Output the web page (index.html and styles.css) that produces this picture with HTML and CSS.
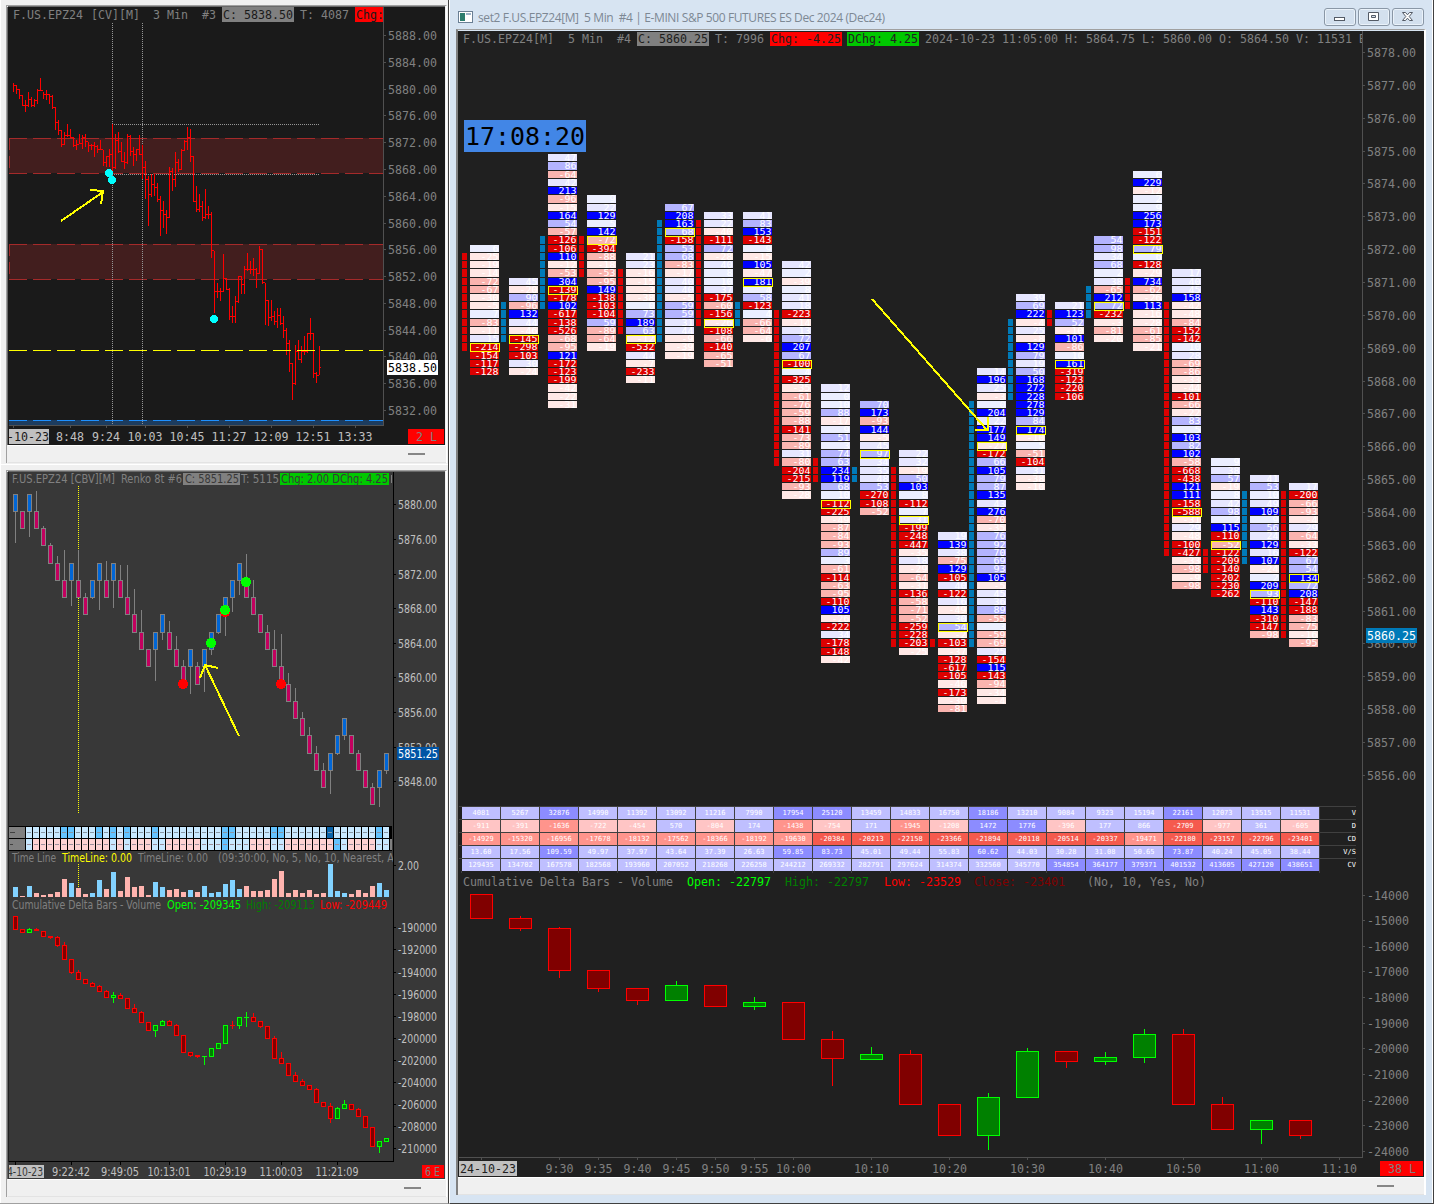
FILE: index.html
```html
<!DOCTYPE html>
<html lang="en">
<head>
    <meta charset="UTF-8">
    <title>set2 F.US.EPZ24[M] 5 Min #4</title>
    <link rel="stylesheet" href="styles.css">
</head>
<body>
    <div class="left-column">
        <div class="pane pane-cv">
            <div class="client">
                <svg id="chart-cv" class="chart mono" width="437" height="438" viewBox="8 7 437 438"></svg>
                <div class="strip"><span class="grip"></span></div>
            </div>
        </div>
        <div class="pane pane-renko">
            <div class="client">
                <svg id="chart-renko" class="chart sans" width="437" height="707" viewBox="8 472 437 707"></svg>
                <div class="strip"><span class="grip"></span></div>
            </div>
        </div>
    </div>

    <div class="window">
        <div class="titlebar">
            <svg class="app-icon" width="15" height="12" viewBox="0 0 15 12">
                <rect x="0.5" y="0.5" width="14" height="11" fill="#fff" stroke="#6a7f94"/>
                <rect x="2" y="2" width="5" height="8" fill="#2d7d6e"/>
                <rect x="8" y="2" width="5" height="2" fill="#9db3c8"/>
            </svg>
            <span class="title">set2 F.US.EPZ24[M]&nbsp; 5 Min&nbsp; #4 | E-MINI S&amp;P 500 FUTURES ES Dec 2024 (Dec24)</span>
            <div class="buttons">
                <button class="btn"><svg width="12" height="10" viewBox="0 0 12 10"><rect x="0.5" y="5.5" width="10" height="3" fill="#fff" stroke="#545b66"/></svg></button>
                <button class="btn"><svg width="12" height="10" viewBox="0 0 12 10"><path d="M.5 .5h10v8h-10z M3.5 3.5h4v2h-4z" fill="#fff" fill-rule="evenodd" stroke="#545b66"/></svg></button>
                <button class="btn"><svg width="12" height="10" viewBox="0 0 12 10"><path d="M.5 .5h3l2 2.3 2-2.3h3l-3.3 4 3.3 4h-3l-2-2.3-2 2.3h-3l3.3-4z" fill="#fff" stroke="#545b66"/></svg></button>
            </div>
        </div>
        <div class="client">
            <svg id="chart-foot" class="chart mono" width="966" height="775" viewBox="458 31 966 775"></svg>
            <div class="stats">
                <div id="stats-grid" class="stats-grid"></div>
                <div class="stats-axis"></div>
            </div>
            <svg id="chart-delta" class="chart mono" width="966" height="306" viewBox="458 871 966 306"></svg>
            <div class="strip"><span class="grip"></span></div>
        </div>
    </div>
    <script src="script.js"></script>
</body>
</html>
```
FILE: styles.css
```css
* {
    box-sizing: border-box;
}

body {
    margin: 0;
    width: 1434px;
    height: 1204px;
    display: flex;
    background-color: #f0f0f0;
    overflow: hidden;
}

.left-column {
    width: 449px;
    height: 1204px;
    border-right: 1px solid #404040;
    border-bottom: 1px solid #a0a0a0;
}

.pane {
    border-left: 1px solid #fff;
    padding: 5px 1px 0 5px;
    background-color: #f0f0f0;
}

.pane-cv {
    height: 464px;
}

.pane-renko {
    height: 739px;
    border-top: 1px solid #fff;
}

.client {
    border-top: 1px solid #a0a0a0;
    border-left: 1px solid #a0a0a0;
    border-right: 1px solid #fff;
}

.chart {
    display: block;
    shape-rendering: crispEdges;
    white-space: pre;
}

.pane .chart {
    box-shadow: 0 -1px 0 #696969, -1px 0 0 #696969;
}

.pane .client {
    padding: 1px 0 0 1px;
}

.mono text {
    font-family: "DejaVu Sans Mono", "Liberation Mono", monospace;
    font-size: 11.4px;
}

.sans text {
    font-family: "DejaVu Sans Condensed", "DejaVu Sans", sans-serif;
    font-size: 11.5px;
}

.mono .cell {
    font-size: 9px;
}

.mono .clock {
    font-size: 24px;
}

.strip {
    height: 18px;
    background-color: #f0f0f0;
    border-top: 1px solid #fff;
    border-bottom: 1px solid #e3e3e3;
    display: flex;
    justify-content: flex-end;
    padding: 7px 21px 0 0;
}

.pane-renko .strip {
    padding-right: 25px;
}

.grip {
    width: 17px;
    height: 2px;
    background-color: #868686;
}

/* main window */

.window {
    width: 985px;
    height: 1204px;
    padding: 0 7px 8px 6px;
    background-color: #d7e4f2;
    border-left: 1px solid #fff;
    border-right: 1px solid #404040;
    border-bottom: 1px solid #404040;
    box-shadow: inset -1px 0 0 #fff;
}

.titlebar {
    height: 29px;
    display: flex;
    align-items: center;
    padding: 5px 2px 0 2px;
    font-family: "Open Sans", "Noto Sans", sans-serif;
    font-size: 12px;
    letter-spacing: -0.39px;
    color: #7d8894;
}

.title {
    margin-left: 5px;
    flex: 1;
    white-space: nowrap;
}

.buttons {
    display: flex;
    gap: 2px;
}

.btn {
    width: 32px;
    height: 18px;
    padding: 0;
    display: flex;
    align-items: center;
    justify-content: center;
    border: 1px solid #8a97a6;
    border-radius: 3px;
    background-color: #d3e0ee;
    box-shadow: inset 0 0 0 1px #eaf2fa;
}

.window .client {
    border-left: 2px solid #808080;
    border-right-width: 2px;
    padding-top: 1px;
}

.window .strip {
    height: 18px;
    padding-right: 30px;
}

.stats {
    display: flex;
    width: 966px;
    height: 65px;
    background-color: #202020;
}

.stats-grid {
    width: 904px;
    display: grid;
    grid-template-columns: 3px repeat(22, 39px) 36px;
    grid-auto-rows: 13px;
    padding-left: 1px;
    font-family: "DejaVu Sans Mono", "Liberation Mono", monospace;
    font-size: 7px;
    line-height: 13px;
    color: #fff;
}

.stats-axis {
    width: 62px;
    border-left: 1px solid #505050;
}

.stat {
    border-top: 1px solid #404040;
    border-right: 1px solid #404040;
    text-align: center;
}

.edge {
    border-top: 1px solid #404040;
}

.row-label {
    border-top: 1px solid #404040;
    text-align: right;
}

.blue-1 { background-color: #bfbfff; }
.blue-2 { background-color: #8c8cff; }
.red-1 { background-color: #ffc5c5; }
.red-2 { background-color: #ff948c; }
.red-3 { background-color: #f55a4e; }
```
FILE: script.js
```js
function rect(x, y, w, h, fill, extra) {
    return '<rect x="' + x + '" y="' + y + '" width="' + w + '" height="' + h + '" fill="' + fill + '" ' + (extra || '') + '/>';
}

function box(x, y, w, h, fill, stroke) {
    return rect(x + 0.5, y + 0.5, w - 1, h - 1, fill, 'stroke="' + stroke + '"');
}

function line(x1, y1, x2, y2, color, dash) {
    return '<line x1="' + x1 + '" y1="' + y1 + '" x2="' + x2 + '" y2="' + y2 + '" stroke="' + color + '"' +
        (dash ? ' stroke-dasharray="' + dash + '"' : '') + '/>';
}

function label(x, y, str, width, color, cls) {
    return '<text x="' + x + '" y="' + y + '" fill="' + color + '"' + (cls ? ' class="' + cls + '"' : '') +
        ' textLength="' + width + '" lengthAdjust="spacingAndGlyphs">' + str + '</text>';
}

// monospaced text, 7px per character
function mono(x, y, str, color) {
    return label(x, y, str, str.length * 7, color);
}

function arrow(points, head) {
    return '<polyline points="' + points + '" fill="none" stroke="#ffff00" stroke-width="2"/>' +
        '<polyline points="' + head + '" fill="none" stroke="#ffff00" stroke-width="2"/>';
}

function dot(x, y, r, color) {
    return '<circle cx="' + x + '" cy="' + y + '" r="' + r + '" fill="' + color + '"/>';
}

/* ---------- 3 min chart ---------- */

// high, low, close in thirds of a pixel
var bars = [
    [250,276,256],[256,283,267],[266,297,286],[285,315,315],[300,335,317],[276,321,297],[291,321,317],[297,320,300],
    [267,311,270],[234,273,271],[276,297,283],[269,299,283],[283,312,290],[285,327,323],[322,390,366],[360,405,390],
    [390,441,433],[395,435,406],[372,412,406],[388,412,411],[411,441,436],[419,450,433],[402,432,430],[406,446,412],
    [402,440,425],[425,455,435],[433,450,436],[426,470,440],[436,460,448],[420,449,449],[450,497,487],[468,500,470],
    [447,500,463],[372,516,503],[402,507,420],[396,459,455],[425,486,484],[455,507,487],[402,492,408],[405,467,455],
    [441,497,463],[446,484,447],[405,465,463],[435,537,502],[483,597,538],[527,678,583],[521,591,552],[523,588,562],
    [548,607,597],[587,707,630],[603,684,642],[630,702,653],[500,654,514],[505,573,537],[455,561,487],[477,516,507],
    [447,510,450],[420,453,423],[380,450,412],[386,486,468],[468,605,603],[557,636,628],[582,636,620],[603,663,653],
    [566,657,642],[617,657,642],[636,773,750],[753,939,873],[849,894,874],[864,902,874],[762,876,835],[834,870,867],
    [864,960,948],[918,969,948],[888,969,903],[828,909,830],[828,882,853],[798,882,808],[759,813,808],[783,822,808],
    [774,828,808],[804,864,820],[737,822,748],[747,852,848],[850,975,901],[900,978,953],[900,963,950],[933,975,965],
    [924,984,947],[924,975,970],[948,1014,991],[984,1065,1030],[1020,1116,1089],[1088,1200,1150],[1035,1155,1053],
    [1020,1081,1078],[1038,1089,1053],[1008,1065,1055],[999,1059,1000],[954,1020,1000],[999,1134,1120],[1117,1149,1127],
    [1038,1125,1102]
];

function drawCv() {
    var s = rect(8, 7, 437, 438, '#1a1a1a');
    var i, y;
    s += rect(9, 138, 374, 35, '#421e1e') + rect(9, 244, 374, 35, '#421e1e') + rect(9, 420, 374, 5, '#1c3c5f');
    [138.5, 173.5, 244.5, 279.5].forEach(function (py) {
        s += line(9, py, 383, py, '#a52a2a', '18 6');
    });
    s += line(9.5, 138, 9.5, 173, '#a52a2a', '12 6') + line(9.5, 244, 9.5, 279, '#a52a2a', '12 6');
    s += line(112.5, 23, 112.5, 424, '#969696', '1 1') + line(142.5, 23, 142.5, 424, '#969696', '1 1');
    s += line(112, 124.5, 320, 124.5, '#969696', '1 1') + line(112, 174.5, 320, 174.5, '#969696', '1 1');
    for (i = 0; i < bars.length; i++) {
        var x = 13 + i * 3;
        var top = Math.round(bars[i][0] / 3);
        s += rect(x, top, 1, Math.round(bars[i][1] / 3) - top, '#ff0000');
        s += rect(x, Math.round(bars[i][2] / 3 - 0.5), 2, 1, '#ff0000');
        if (i > 0) {
            s += rect(x - 1, Math.round(bars[i - 1][2] / 3 - 0.5), 1, 1, '#ff0000');
        }
    }
    s += line(9, 350.5, 383, 350.5, '#ffff00', '18 6') + line(9, 420.5, 383, 420.5, '#1e90ff', '18 6');
    s += dot(109, 173, 4, '#00ffff') + dot(112, 180, 4, '#00ffff') + dot(214, 319, 4, '#00ffff');
    s += arrow('61,221 103,192', '90,190 103,191 101,204');

    s += mono(13, 19, 'F.US.EPZ24', '#808080') + mono(91, 19, '[CV][M]', '#808080');
    s += mono(153, 19, '3 Min', '#808080') + mono(202, 19, '#3', '#808080');
    s += rect(222, 7, 72, 15, '#808080') + mono(223, 19, 'C: 5838.50', '#1a1a1a');
    s += mono(300, 19, 'T: 4087', '#808080');
    s += rect(355, 7, 28, 15, '#ff0000') + mono(356, 19, 'Chg:', '#1a1a1a');

    s += line(383.5, 7, 383.5, 426, '#505050') + line(9, 425.5, 384, 425.5, '#505050');
    for (i = 0; i < 15; i++) {
        y = Math.round(35 + i * 26.79);
        s += rect(384, y, 2, 1, '#505050') + mono(388, y + 5, (5888 - i * 4) + '.00', '#808080');
    }
    s += rect(387, 360, 51, 15, '#ffffff') + mono(388, 372, '5838.50', '#000000');
    s += rect(13, 426, 1, 2, '#505050') + rect(9, 429, 40, 15, '#c0c0c0') + mono(7, 441, '-10-23', '#1a1a1a');
    [[70, '8:48'], [106, '9:24'], [145, '10:03'], [187, '10:45'], [229, '11:27'], [271, '12:09'], [313, '12:51'], [355, '13:33']].forEach(function (t) {
        s += rect(t[0], 426, 1, 2, '#505050') + mono(t[0] - t[1].length * 3.5, 441, t[1], '#c0c0c0');
    });
    s += rect(408, 429, 36, 15, '#ff0000') + mono(416, 441, '2 L', '#808080');
    document.getElementById('chart-cv').innerHTML = s;
}

/* ---------- renko chart ---------- */

var levels = [494, 511, 528, 545, 563, 580, 597, 614, 632, 649, 666, 684, 701, 718, 735, 753, 770, 787, 804];

// brick level, direction, wick end
var bricks = [
    [0,1,543],[1,0],[0,1,537],[1,0,491],[2,0,526],[3,0,543],[4,0,556],[5,0,550],[4,1,606],[5,0,550],[6,0,593],[5,1,599],
    [4,1,610],[5,0,561],[4,1,608],[5,0,565],[6,0,565],[7,0,589],[8,0,610],[9,0],[8,1,681],[7,1,640],[8,0,621],[9,0,636],
    [10,0,660],[9,1,694],[10,0,662],[9,1,692],[8,1,655],[7,1,634],[6,1,636],[5,1,612],[4,1,595],[5,0,554],[6,0,580],[7,0],
    [8,0,625],[9,0,630],[10,0,634],[11,0,673],[12,0,688],[13,0,712],[14,0,727],[15,0,746],[16,0,763],[15,1,794],
    [14,1,755],[13,1,740],[14,0],[15,0,750],[16,0],[17,0,783],[16,1,807],[15,1,774]
];

// volume height in thirds of a pixel, sign is the delta direction
var volume = [
    30,-3,33,-12,-6,-9,-15,-54,42,-27,-9,12,51,-24,75,-18,-60,-30,-33,-6,45,30,-21,-24,-15,21,-15,33,12,15,39,51,24,
    -33,-18,-18,-21,-54,-78,-12,-21,-12,-21,-9,-12,99,18,12,-9,-21,-12,-33,42,21
];

// direction, body top, body bottom, high, low
var cumDelta = [
    [0,78,119],[0,118,128],[1,117,129,114],[0,118,122,114],[0,123,141],[0,138,144,138,147],[0,141,168,138,171],[0,165,209,156],
    [0,207,248,207,251],[0,246,269,240],[0,267,282],[0,279,291,276],[0,288,306,285],[0,303,323,300],[1,315,324,306,339],
    [0,315,326,309],[0,324,357],[0,354,369,342],[0,366,398,363],[0,396,423],[1,405,423,405,441],[1,393,408,390],
    [0,393,408,390],[0,405,437,402],[0,435,489],[0,486,498,486,501],[0,495,501,495,504],[1,498,500,498,525],[1,474,500],
    [1,459,477],[1,405,461],[0,405,407,393,417],[1,381,408,381,417],[1,381,383,366,411],[0,381,395,369],[0,393,411,393,414],
    [0,408,446],[0,444,507,438],[0,504,521,486],[0,519,557],[0,555,575,546],[0,573,587,567],[0,585,599],[0,597,638,594],
    [0,636,650],[0,648,687,639,699],[1,654,687,651],[1,642,657,630],[0,642,660],[0,657,681,654],[0,678,713],[0,711,771],
    [1,753,771,753,789],[1,744,756]
];

function candle(cx, half, top, bottom, high, low, up) {
    var stroke = up ? '#00ff00' : '#ff0000';
    var h = Math.max(bottom - top, 1);
    var s = rect(cx, high, 1, Math.max(low - high, 1), stroke);
    if (h < 3) {
        return s + rect(cx - half, top, half * 2 + 1, h, stroke);
    }
    return s + box(cx - half, top, half * 2 + 1, h, up ? '#008000' : '#800000', stroke);
}

function drawRenko() {
    var s = rect(8, 472, 437, 707, '#383838');
    var i, y;
    s += line(78.5, 486, 78.5, 813, '#ffff00', '1 1') + line(78.5, 864, 78.5, 897, '#ffff00', '1 1');
    bricks.forEach(function (b, n) {
        var x = 13 + n * 7;
        var top = levels[b[0]];
        var bottom = levels[b[0] + 1];
        if (b[2]) {
            s += b[1] ? rect(x + 2, bottom, 1, b[2] - bottom, '#808080') : rect(x + 2, b[2], 1, top - b[2], '#808080');
        }
        s += box(x, top, 5, bottom - top + 1, b[1] ? '#0066d6' : '#c3005f', '#808080');
    });
    s += dot(183, 684, 5, '#ff0000') + dot(225, 612, 5, '#ff0000') + dot(281, 684, 5, '#ff0000');
    s += dot(211, 643, 5, '#00ff00') + dot(225, 610, 5, '#00ff00') + dot(246, 582, 5, '#00ff00');
    s += arrow('239,736 205,665', '200,678 205,665 218,668');

    s += label(12, 483, 'F.US.EPZ24 [CBV][M]', 103, '#808080') + label(121, 483, 'Renko 8t #6', 61, '#808080');
    s += rect(183, 473, 57, 12, '#808080') + label(185, 483, 'C: 5851.25', 54, '#383838');
    s += label(241, 483, 'T: 5115', 38, '#808080');
    s += rect(280, 473, 109, 12, '#00c800') + label(281, 483, 'Chg: 2.00 DChg: 4.25', 107, '#383838');
    s += rect(391, 475, 1, 8, '#808080');

    // delta / volume heat rows
    s += rect(9, 826, 383, 25, '#000000') + rect(9, 827, 16, 11, '#808080') + rect(9, 839, 16, 11, '#808080');
    s += rect(10, 832, 5, 1, '#404040') + rect(10, 844, 3, 1, '#404040') + rect(390, 839, 2, 11, '#808080');
    var mid1 = [5, 6, 10, 12, 14, 18, 28, 29, 35, 36, 50];
    var blue2 = [0, 12, 14, 18, 19, 25, 26, 27, 29, 30, 31, 35, 36, 45, 50, 51];
    for (i = 0; i < 52; i++) {
        var a = mid1.indexOf(i) >= 0 ? '#64c3ff' : (i == 43 ? '#0a64aa' : '#c8e8ff');
        var b = (i == 28 || i == 44) ? '#64c3ff' : (blue2.indexOf(i) >= 0 ? '#c8e8ff' : '#ffd2d2');
        s += rect(26 + i * 7, 827, 6, 11, a) + rect(26 + i * 7, 839, 6, 11, b);
        s += rect(27 + i * 7, 832, 4, 1, '#8896a4') + rect(27 + i * 7, 844, 4, 1, '#9c8f9c');
    }

    s += label(12, 862, 'Time Line', 44, '#808080') + label(62, 862, 'TimeLine: 0.00', 70, '#ffff00');
    s += label(138, 862, 'TimeLine: 0.00', 70, '#808080') + label(218, 862, '(09:30:00, No, 5, No, 10, Nearest, A', 176, '#808080');
    volume.forEach(function (v, n) {
        var h = Math.round(Math.abs(v) / 3);
        s += rect(13 + n * 7, 897 - h, 5, h, v > 0 ? '#82d2ff' : '#ffb4af');
    });
    s += label(12, 909, 'Cumulative Delta Bars - Volume', 149, '#808080') + label(167, 909, 'Open: -209345', 74, '#00ff00');
    s += label(246, 909, 'High: -209113', 69, '#008000') + label(320, 909, 'Low: -209449', 67, '#ff0000');
    cumDelta.forEach(function (c, n) {
        var px = function (v) { return 890 + Math.round(v / 3); };
        s += candle(15 + n * 7, 2, px(c[1]), px(c[2]), px(c[3] || c[1]), px(c[4] || c[2]), c[0]);
    });

    // axes
    s += rect(394, 472, 51, 707, '#383838');
    s += line(393.5, 472, 393.5, 1162, '#000000') + line(9, 1161.5, 394, 1161.5, '#000000') + line(8.5, 472, 8.5, 1162, '#202020');
    for (i = 0; i < 9; i++) {
        y = Math.round(504.4 + i * 34.6);
        s += rect(394, y, 2, 1, '#000000') + label(398, y + 5, (5880 - i * 4) + '.00', 39, '#c0c0c0');
    }
    s += rect(397, 747, 42, 13, '#0054a5') + label(398, 758, '5851.25', 40, '#ffffff');
    s += rect(394, 865, 2, 1, '#000000') + label(398, 870, '2.00', 21, '#c0c0c0');
    for (i = 0; i < 11; i++) {
        y = Math.round(927.3 + i * 22.1);
        s += rect(394, y, 2, 1, '#000000') + label(398, y + 5, '-' + (190000 + i * 2000), 39, '#c0c0c0');
    }
    s += rect(15, 1162, 1, 3, '#000000') + rect(9, 1165, 35, 13, '#c0c0c0') + label(7, 1176, '4-10-23', 36, '#383838');
    s += rect(8, 1165, 1, 13, '#383838');
    [[71, '9:22:42', 38], [120, '9:49:05', 38], [169, '10:13:01', 43], [225, '10:29:19', 43], [281, '11:00:03', 43], [337, '11:21:09', 43]].forEach(function (t) {
        s += rect(t[0], 1162, 1, 3, '#000000') + label(t[0] - t[2] / 2, 1176, t[1], t[2], '#c0c0c0');
    });
    s += rect(422, 1165, 22, 13, '#ff0000') + label(425, 1176, '6 E', 15, '#808080');
    document.getElementById('chart-renko').innerHTML = s;
}

/* ---------- footprint chart ---------- */

// top row, side bar [up, from, to], index of the point of control, deltas from the high down
var columns = [
    [48, [0,47,36], 12, [6,-25,-19,-14,-72,-67,-30,-5,7,-83,-11,15,-214,-154,-117,-128]],
    [44, [1,41,37], 7, [45,-20,90,-96,132,44,-46,-145,-298,-103,30,-24]],
    [59, [1,49,41], 16, [47,86,-64,42,213,-96,-15,164,54,-57,-126,-106,110,-12,-53,304,-139,-178,102,-617,-138,-526,-68,-95,121,-172,-123,-199,-42,-22,-31]],
    [54, [0,49,45], 5, [9,22,129,5,142,-72,-394,-88,-18,-53,-95,149,-138,-103,-104,59,-89,-64,-19]],
    [47, [0,45,38], 10, [21,23,-16,-15,-3,-38,0,73,189,63,-12,-532,44,-7,-233,-11]],
    [53, [1,51,37], 3, [67,208,163,68,-158,53,68,-83,-17,40,40,-5,59,59,31,44,-9,-39,-19]],
    [52, [0,51,39], 13, [33,22,-40,-111,72,-28,40,8,10,37,-175,-60,-156,-26,-108,-66,-140,-65,-51]],
    [52, [1,41,39], 8, [41,83,153,-143,9,-15,105,-47,181,4,58,-123,4,-66,-64,-6]],
    [46, [0,40,22], 12, [42,2,-39,8,41,18,-223,-14,13,72,207,67,-100,4,-325,-35,-61,-76,-59,-88,-141,-73,-89,31,-80,-204,-215,-93,-28]],
    [31, [0,22,20], 14, [12,0,10,88,-17,9,51,3,74,63,234,119,68,10,-112,-225,-49,-87,-84,-93,89,3,-61,-114,-63,-95,-110,105,-26,-222,34,-178,-148,-42]],
    [29, [1,21,20], 6, [70,173,-93,144,-5,45,97,34,35,48,53,-270,-108,-52]],
    [23, [0,21,0], 8, [22,32,-19,50,103,8,-112,7,31,-199,-248,-447,-35,18,-29,-64,-31,-136,-58,-71,-52,-259,-228,-203,-25]],
    [13, [0,0,0], 11, [19,139,38,-75,129,-105,40,-122,16,-49,30,54,-2,-103,-37,-128,-617,-105,-46,-173,-30,-81]],
    [33, [1,29,0], 9, [14,196,25,-3,0,204,22,177,149,-27,-172,66,105,79,87,135,43,276,-70,-35,76,92,70,69,93,105,-5,45,36,89,-55,3,-59,-69,25,-154,115,-143,-94,-34,-4]],
    [42, [1,39,30], 16, [39,69,222,-4,25,-8,129,79,19,50,168,272,228,278,129,84,174,-10,5,-51,-104,31,-38,-10]],
    [41, [0,40,39], 7, [21,123,52,-10,101,-86,10,161,-319,-123,-220,-106]],
    [49, [1,43,40], 8, [54,98,34,68,2,38,-65,212,72,-232,-3,-81,-20]],
    [57, [0,44,41], 9, [6,229,-12,2,9,256,173,-151,-122,79,6,-128,-29,734,-62,-26,113,-16,-28,-61,-85,-21]],
    [45, [0,41,11], 29, [17,40,45,158,-42,-48,-84,-152,-142,10,28,-69,-86,-33,-44,-101,-66,-22,83,5,103,82,102,-58,-668,-438,121,111,-158,-588,-31,29,-48,-100,-427,-33,-98,-9,-98]],
    [22, [0,11,9], 10, [9,38,57,-19,8,42,98,2,115,-110,-52,-122,-209,-140,-202,-230,-262]],
    [20, [1,18,10], 14, [41,53,10,49,109,9,56,24,129,16,107,-24,2,209,93,-110,143,-310,-147,-98]],
    [19, [0,18,1], 11, [17,-200,-66,-93,-4,29,-64,-33,-122,67,54,134,72,208,-147,-188,-83,-75,-16,-95]]
];

function rowTop(r) {
    return Math.ceil(638.85 - 8.222 * r);
}

function rowHeight(r) {
    return rowTop(r - 1) - rowTop(r) - 1;
}

function cellColor(v) {
    if (v >= 100) return '#0000ff';
    if (v >= 50) return '#b4b4ff';
    if (v > 10) return '#e6e6ff';
    if (v >= 0) return '#ebeeff';
    if (v > -50) return '#ffe8e6';
    if (v > -100) return '#fab4af';
    return '#dc0000';
}

function drawFootprint() {
    var s = rect(458, 31, 966, 775, '#202020');
    var i, y;
    columns.forEach(function (col, n) {
        var x = 470 + n * 39;
        var bar = col[1];
        for (var r = bar[1]; r >= bar[2]; r--) {
            s += rect(x - 8, rowTop(r), 5, rowHeight(r), bar[0] ? '#007ab8' : '#dc0000');
        }
        col[3].forEach(function (v, k) {
            var row = col[0] - k;
            var str = String(v);
            s += rect(x, rowTop(row), 29, rowHeight(row), cellColor(v));
            s += label(x + 28.5 - str.length * 6, rowTop(row) + 7, str, str.length * 6, '#ffffff', 'cell');
        });
        s += box(x, rowTop(col[0] - col[2]), 30, 9, 'none', '#ffff00');
    });
    s += rect(464, 120, 122, 32, '#4286e6') + label(465, 145, '17:08:20', 120, '#000000', 'clock');
    s += arrow('872,299 987,430', '975,430 988,430 988,417');

    s += mono(463, 43, 'F.US.EPZ24[M]', '#808080') + mono(568, 43, '5 Min', '#808080') + mono(617, 43, '#4', '#808080');
    s += rect(637, 32, 72, 14, '#808080') + mono(638, 43, 'C: 5860.25', '#202020') + mono(715, 43, 'T: 7996', '#808080');
    s += rect(770, 32, 72, 14, '#ff0000') + mono(771, 43, 'Chg: -4.25', '#202020');
    s += rect(847, 32, 72, 14, '#00c800') + mono(848, 43, 'DChg: 4.25', '#202020');
    s += mono(925, 43, '2024-10-23 11:05:00 H: 5864.75 L: 5860.00 O: 5864.50 V: 11531 B', '#808080');

    s += rect(1362, 31, 62, 775, '#202020') + line(1362.5, 31, 1362.5, 806, '#505050');
    for (i = 0; i < 23; i++) {
        y = Math.round(52 + i * 32.86);
        s += rect(1363, y, 2, 1, '#505050') + mono(1367, y + 5, (5878 - i) + '.00', '#808080');
    }
    s += rect(1366, 628, 51, 15, '#007ab8') + mono(1367, 640, '5860.25', '#ffffff');
    document.getElementById('chart-foot').innerHTML = s;
}

/* ---------- statistics rows ---------- */

var stats = [
    ['V', '4081 5267 32876 14990 11392 13092 11216 7990 17954 25120 13459 14833 16750 18186 13210 9084 9323 15194 22161 12073 13515 11531'],
    ['D', '-911 -391 -1636 -722 -454 570 -804 174 -1438 -754 171 -1945 -1208 1472 1776 -396 177 866 -2709 -977 361 -605'],
    ['CD', '-14929 -15320 -16956 -17678 -18132 -17562 -18366 -18192 -19630 -20384 -20213 -22158 -23366 -21894 -20118 -20514 -20337 -19471 -22180 -23157 -22796 -23401'],
    ['V/S', '13.60 17.56 109.59 49.97 37.97 43.64 37.39 26.63 59.85 83.73 45.01 49.44 55.83 60.62 44.03 30.28 31.08 50.65 73.87 40.24 45.05 38.44'],
    ['CV', '129435 134702 167578 182568 193960 207052 218268 226258 244212 269332 282791 297624 314374 332560 345770 354854 364177 379371 401532 413605 427120 438651']
];

function statClass(name, v) {
    if (name == 'V') return v > 17000 ? 'blue-2' : 'blue-1';
    if (name == 'V/S') return v > 59 ? 'blue-2' : 'blue-1';
    if (name == 'CV') return v > 350000 ? 'blue-2' : 'blue-1';
    if (name == 'CD') return v < -20000 ? 'red-3' : 'red-2';
    if (v > 0) return v > 1400 ? 'blue-2' : 'blue-1';
    return v < -2500 ? 'red-3' : (v < -1400 ? 'red-2' : 'red-1');
}

function drawStats() {
    var s = '';
    stats.forEach(function (row) {
        s += '<div class="edge"></div>';
        row[1].split(' ').forEach(function (v) {
            s += '<div class="stat ' + statClass(row[0], parseFloat(v)) + '">' + v + '</div>';
        });
        s += '<div class="row-label">' + row[0] + '</div>';
    });
    document.getElementById('stats-grid').innerHTML = s;
}

/* ---------- cumulative delta ---------- */

// direction, body top, body bottom, high, low
var delta = [
    [0,894,919],[0,918,929,916,931],[0,928,971,927,978],[0,970,989,970,992],[0,988,1001,988,1005],[1,985,1001,981],
    [0,985,1007],[1,1002,1007,997,1010],[0,1002,1040],[0,1039,1059,1031,1086],[1,1054,1060,1047],[0,1054,1105,1050],
    [0,1104,1136],[1,1097,1136,1093,1150],[1,1051,1098,1048],[0,1051,1062,1051,1068],[1,1057,1062,1052,1065],
    [1,1034,1058,1029,1063],[0,1034,1105,1029],[0,1104,1130,1097],[1,1120,1130,1120,1144],[0,1120,1136,1120,1139]
];

function drawDelta() {
    var s = rect(458, 871, 966, 306, '#202020');
    var i, y;
    for (i = 0; i < 23; i++) {
        s += rect(461 + i * 39, 871, 1, 2, '#404040');
    }
    s += mono(463, 886, 'Cumulative Delta Bars - Volume', '#808080') + mono(687, 886, 'Open: -22797', '#00ff00');
    s += mono(785, 886, 'High: -22797', '#008000') + mono(884, 886, 'Low: -23529', '#ff0000');
    s += mono(974, 886, 'Close: -23401', '#800000') + mono(1087, 886, '(No, 10, Yes, No)', '#808080');
    delta.forEach(function (c, n) {
        s += candle(481 + n * 39, 11, c[1], c[2], c[3] || c[1], c[4] || c[2], c[0]);
    });
    s += line(1362.5, 871, 1362.5, 1158, '#505050') + line(459, 1157.5, 1363, 1157.5, '#505050');
    for (i = 0; i < 11; i++) {
        y = Math.round(894.5 + i * 25.66);
        s += rect(1363, y, 2, 1, '#505050') + mono(1367, y + 5, '-' + (14000 + i * 1000), '#808080');
    }
    s += rect(1363, 1158, 61, 19, '#202020');
    s += rect(481, 1158, 1, 2, '#505050') + rect(459, 1161, 58, 15, '#c0c0c0') + mono(460, 1173, '24-10-23', '#202020');
    ['9:30', '9:35', '9:40', '9:45', '9:50', '9:55', '10:00', '', '10:10', '', '10:20', '', '10:30', '', '10:40', '', '10:50', '', '11:00', '', '11:10'].forEach(function (t, n) {
        var x = 559 + n * 39;
        if (t) {
            s += rect(x, 1158, 1, 2, '#505050') + mono(x + 0.5 - t.length * 3.5, 1173, t, '#808080');
        }
    });
    s += rect(1380, 1161, 43, 15, '#ff0000') + mono(1388, 1173, '38 L', '#808080');
    document.getElementById('chart-delta').innerHTML = s;
}

drawCv();
drawRenko();
drawFootprint();
drawStats();
drawDelta();
```
